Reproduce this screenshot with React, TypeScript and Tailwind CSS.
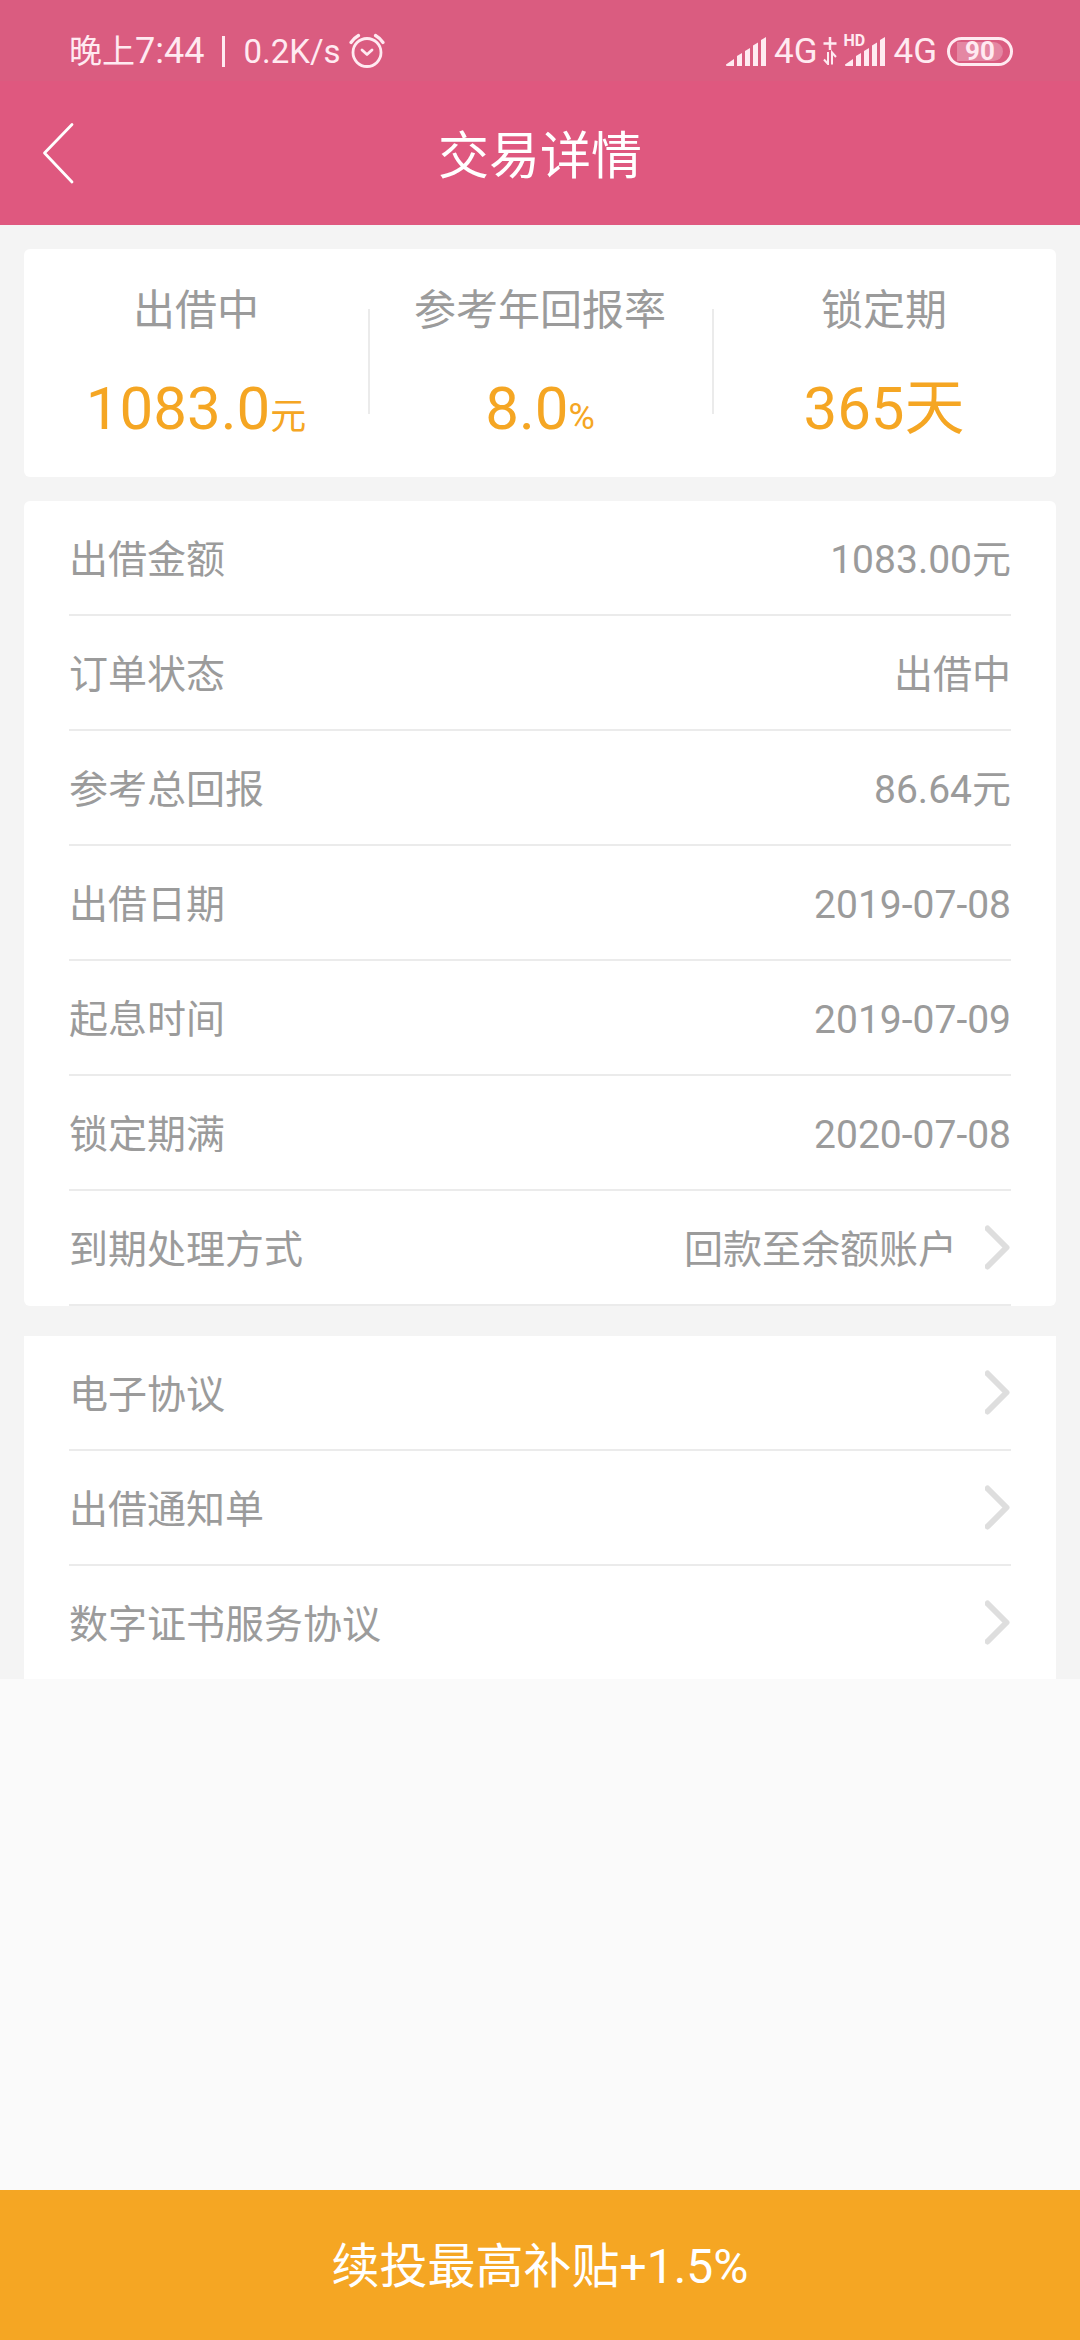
import React from "react";

const summary = [
  { label: "出借中", value: "1083.0", unit: "元" },
  { label: "参考年回报率", value: "8.0", unit: "%" },
  { label: "锁定期", value: "365天", unit: "" },
];

const details = [
  { label: "出借金额", value: "1083.00元" },
  { label: "订单状态", value: "出借中" },
  { label: "参考总回报", value: "86.64元" },
  { label: "出借日期", value: "2019-07-08" },
  { label: "起息时间", value: "2019-07-09" },
  { label: "锁定期满", value: "2020-07-08" },
];

const agreements = ["电子协议", "出借通知单", "数字证书服务协议"];

const SignalBars = () => (
  <svg className="w-10 h-[29px]" viewBox="0 0 40 29" fill="currentColor">
    <path d="M0 27.5 L8 22 V29 H1 Q0 29 0 28Z" />
    <path d="M11 19 L16 16 V29 H11Z" />
    <path d="M19 14 L24 11 V29 H19Z" />
    <path d="M27 8.5 L32 5.5 V29 H27Z" />
    <path d="M35 3 L40 0 V29 H35Z" />
  </svg>
);

const AlarmIcon = () => (
  <svg
    className="w-9 h-9 ml-2"
    viewBox="0 0 36 36"
    fill="none"
    stroke="currentColor"
    strokeWidth="2.8"
    strokeLinecap="round"
    strokeLinejoin="round"
  >
    <circle cx="18" cy="19.500" r="14" />
    <path d="M13 17 L18 21.500 L23 17" />
    <path d="M2 9.500 Q5 5 9.500 2.500" strokeWidth="3.2" />
    <path d="M34 9.500 Q31 5 26.500 2.500" strokeWidth="3.2" />
  </svg>
);

const Chevron = () => (
  <svg
    className="w-[26px] h-[46px]"
    viewBox="0 0 26 46"
    fill="none"
    stroke="#dedede"
    strokeWidth="6"
    strokeLinecap="round"
    strokeLinejoin="round"
  >
    <path d="M2.500 3.500 L21.500 22.500 L2.500 41.500" />
  </svg>
);

const StatusBar = () => {
  return (
    <div className="flex items-center justify-between h-[81px] pt-[21px] pl-[69px] pr-[67px] bg-[#da5c80] text-[#ffeaf1]">
      <div className="flex items-center">
        <span className="text-[33px] leading-none">晚上</span>
        <span className="text-[36px] leading-none">7:44</span>
        <span className="w-[3px] h-[31px] mx-[18px] bg-[#ffeaf1]" />
        <span className="text-[33px] leading-none">0.2K/s</span>
        <AlarmIcon />
      </div>
      <div className="flex items-center">
        <SignalBars />
        <span className="ml-2 text-[35px] leading-none">4G</span>
        <svg
          className="w-3.5 h-7 ml-1.5 mr-2"
          viewBox="0 0 14 28"
          fill="none"
          stroke="currentColor"
          strokeWidth="2.5"
        >
          <path d="M7 0 V13 M0.500 6.500 H13.500" />
          <path d="M5 15 V27 L1 22.500" strokeWidth="2" />
          <path d="M9 27.500 V15.500 L13 20" strokeWidth="2" />
        </svg>
        <span className="relative flex">
          <span className="absolute -top-1 -left-0.5 text-base leading-none font-bold">
            HD
          </span>
          <SignalBars />
        </span>
        <span className="ml-2 text-[35px] leading-none">4G</span>
        <span className="flex items-center w-[66px] h-[29px] ml-2.5 px-[7px] border-3 border-[#ffeaf1] rounded-full">
          <span className="flex items-center justify-center w-full h-[19px] rounded-l-sm rounded-r-full bg-[#e487a3] text-[26px] leading-none font-bold">
            90
          </span>
        </span>
      </div>
    </div>
  );
};

const Header = () => {
  return (
    <header className="grid grid-cols-[1fr_auto_1fr] items-center h-36 bg-[#df587f] text-white">
      <button className="justify-self-start pl-10 pr-6 py-4" aria-label="返回">
        <svg
          className="w-9 h-[62px]"
          viewBox="0 0 36 62"
          fill="none"
          stroke="currentColor"
          strokeWidth="2.8"
          strokeLinecap="round"
          strokeLinejoin="round"
        >
          <path d="M32 2.500 L4.500 31 L32 60" />
        </svg>
      </button>
      <h1 className="pt-1.5 text-[51px] leading-none">交易详情</h1>
    </header>
  );
};

const App = () => {
  return (
    <div className="flex flex-col min-h-screen bg-[#fafafa] font-['Roboto','Noto_Sans_CJK_SC',sans-serif] text-[#9b9b9b]">
      <StatusBar />
      <Header />
      <main className="px-6 pt-6 bg-[#f4f4f4]">
        <section className="grid grid-cols-3 items-center h-[228px] bg-white rounded-md">
          {summary.map((item, i) => (
            <div
              key={item.label}
              className="relative flex flex-col items-center gap-8"
            >
              <span className="text-[42px] leading-[60px]">{item.label}</span>
              <span className="h-[72px] text-[60px] leading-[72px] text-[#f5a623]">
                {item.value}
                {item.unit && (
                  <span className="text-[36px] leading-none">{item.unit}</span>
                )}
              </span>
              {i > 0 && (
                <span className="absolute left-0 top-7 w-0.5 h-[105px] bg-[#ebebeb]" />
              )}
            </div>
          ))}
        </section>

        <section className="mt-6 px-[45px] bg-white rounded-md text-[39px] leading-[56px]">
          <dl>
            {details.map((item) => (
              <div
                key={item.label}
                className="flex items-center justify-between h-[115px] pt-1 border-b-2 border-[#ebebeb]"
              >
                <dt>{item.label}</dt>
                <dd>{item.value}</dd>
              </div>
            ))}
          </dl>
          <button className="flex items-center w-full h-[115px] border-b-2 border-[#ebebeb]">
            <span className="pt-1">到期处理方式</span>
            <span className="pt-1 ml-auto mr-7">回款至余额账户</span>
            <Chevron />
          </button>
        </section>

        <nav className="mt-[30px] px-[45px] bg-white text-[39px] leading-[56px] divide-y-2 divide-[#ebebeb]">
          {agreements.map((name) => (
            <a
              key={name}
              href="#"
              className="flex items-center justify-between h-[115px] last:h-[113px]"
            >
              <span className="pt-1">{name}</span>
              <Chevron />
            </a>
          ))}
        </nav>
      </main>
      <button className="w-full h-[150px] mt-auto pt-1 bg-[#f5a623] text-[48px] text-white">
        续投最高补贴+1.5%
      </button>
    </div>
  );
};

export default App;
